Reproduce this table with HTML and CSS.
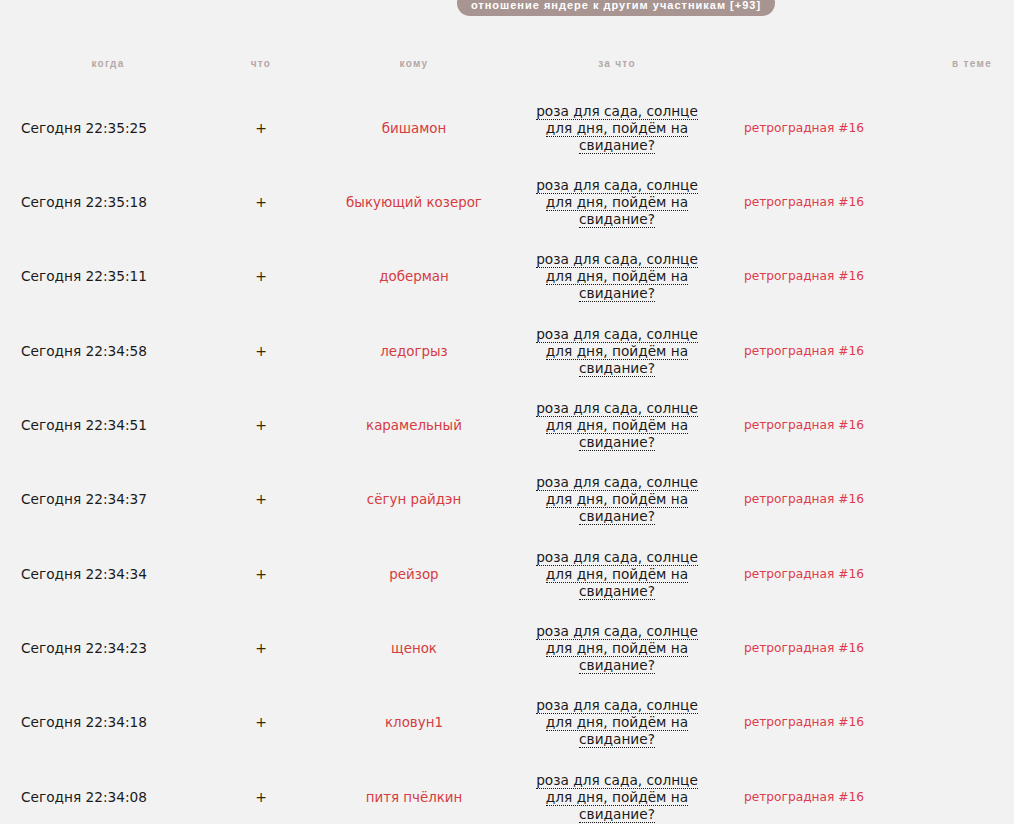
FILE: index.html
```html
<!DOCTYPE html>
<html lang="ru">
<head>
<meta charset="utf-8">
<link rel="stylesheet" href="styles.css">
</head>
<body>
<div class="top">
  <div class="pill">отношение яндере к другим участникам [+93]</div>
</div>
<table class="log">
  <colgroup>
    <col class="c-when"><col class="c-what"><col class="c-who"><col class="c-why"><col class="c-topic">
  </colgroup>
  <thead>
    <tr>
      <th class="h-when">когда</th>
      <th>что</th>
      <th>кому</th>
      <th>за что</th>
      <th class="h-topic">в теме</th>
    </tr>
  </thead>
  <tbody>
    <tr><td class="when">Сегодня 22:35:25</td><td class="what">+</td><td class="who">бишамон</td><td class="why"><div class="why-box"><span>роза для сада, солнце для дня, пойдём на свидание?</span></div></td><td class="topic">ретроградная #16</td></tr>
    <tr><td class="when">Сегодня 22:35:18</td><td class="what">+</td><td class="who">быкующий козерог</td><td class="why"><div class="why-box"><span>роза для сада, солнце для дня, пойдём на свидание?</span></div></td><td class="topic">ретроградная #16</td></tr>
    <tr><td class="when">Сегодня 22:35:11</td><td class="what">+</td><td class="who">доберман</td><td class="why"><div class="why-box"><span>роза для сада, солнце для дня, пойдём на свидание?</span></div></td><td class="topic">ретроградная #16</td></tr>
    <tr><td class="when">Сегодня 22:34:58</td><td class="what">+</td><td class="who">ледогрыз</td><td class="why"><div class="why-box"><span>роза для сада, солнце для дня, пойдём на свидание?</span></div></td><td class="topic">ретроградная #16</td></tr>
    <tr><td class="when">Сегодня 22:34:51</td><td class="what">+</td><td class="who">карамельный</td><td class="why"><div class="why-box"><span>роза для сада, солнце для дня, пойдём на свидание?</span></div></td><td class="topic">ретроградная #16</td></tr>
    <tr><td class="when">Сегодня 22:34:37</td><td class="what">+</td><td class="who">сёгун райдэн</td><td class="why"><div class="why-box"><span>роза для сада, солнце для дня, пойдём на свидание?</span></div></td><td class="topic">ретроградная #16</td></tr>
    <tr><td class="when">Сегодня 22:34:34</td><td class="what">+</td><td class="who">рейзор</td><td class="why"><div class="why-box"><span>роза для сада, солнце для дня, пойдём на свидание?</span></div></td><td class="topic">ретроградная #16</td></tr>
    <tr><td class="when">Сегодня 22:34:23</td><td class="what">+</td><td class="who">щенок</td><td class="why"><div class="why-box"><span>роза для сада, солнце для дня, пойдём на свидание?</span></div></td><td class="topic">ретроградная #16</td></tr>
    <tr><td class="when">Сегодня 22:34:18</td><td class="what">+</td><td class="who">кловун1</td><td class="why"><div class="why-box"><span>роза для сада, солнце для дня, пойдём на свидание?</span></div></td><td class="topic">ретроградная #16</td></tr>
    <tr><td class="when">Сегодня 22:34:08</td><td class="what">+</td><td class="who">питя пчёлкин</td><td class="why"><div class="why-box"><span>роза для сада, солнце для дня, пойдём на свидание?</span></div></td><td class="topic">ретроградная #16</td></tr>
  </tbody>
</table>
</body>
</html>
```

FILE: styles.css
```css
html, body {
  margin: 0;
  padding: 0;
  background: #f2f2f2;
}
body {
  font-family: "DejaVu Sans", Verdana, sans-serif;
  font-size: 13.7px;
  color: #1a1a1a;
  overflow: hidden;
}
.top {
  display: flex;
  padding-left: 457px;
  height: 16px;
}
.pill {
  margin-top: -10px;
  height: 26px;
  line-height: 30px;
  width: 318px;
  box-sizing: border-box;
  border-radius: 13px;
  background: #a89592;
  color: #ffffff;
  font-family: "Liberation Sans", Arial, sans-serif;
  font-weight: bold;
  font-size: 11px;
  letter-spacing: 1px;
  text-align: center;
}
.log {
  width: 100%;
  border-collapse: collapse;
  table-layout: fixed;
}
.c-when { width: 216px; }
.c-what { width: 90px; }
.c-who { width: 216px; }
.c-why { width: 190px; }
.log th {
  font-family: "Liberation Sans", Arial, sans-serif;
  font-weight: bold;
  font-size: 10px;
  letter-spacing: 1.3px;
  color: #b5a9a6;
  text-align: center;
  padding: 41px 0 20px;
  line-height: 14px;
}
.log th.h-topic {
  text-align: right;
  padding-right: 22px;
}
.log td {
  padding: 11.68px 0;
  line-height: 17px;
  text-align: center;
  vertical-align: middle;
}
.log td.when {
  text-align: left;
  padding-left: 21px;
}
.log td.what {
  color: #3a2a00;
  font-size: 14px;
}
.log td.who {
  color: #d63b40;
  font-size: 13.4px;
}
.why-box {
  width: 176px;
  margin: 0 auto;
}
.why-box span {
  border-bottom: 1px dotted #1a1a1a;
}
.log td.topic {
  text-align: left;
  padding-left: 32px;
  color: #df3a4c;
  font-size: 12.2px;
}
```
